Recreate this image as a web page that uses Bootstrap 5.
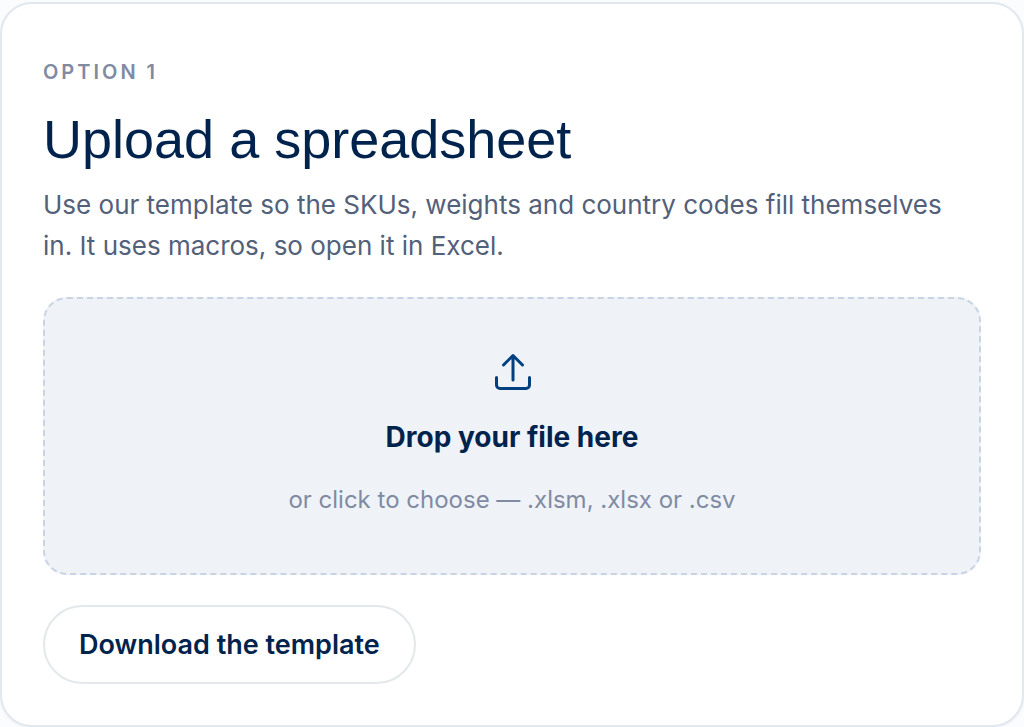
<!DOCTYPE html>
<html lang="en">
<head>
<meta charset="utf-8">
<meta name="viewport" content="width=device-width, initial-scale=1">
<title>Upload a spreadsheet</title>
<link href="https://cdn.jsdelivr.net/npm/bootstrap@5.3.0/dist/css/bootstrap.min.css" rel="stylesheet">
<style>
body{font-family:Inter,"Liberation Sans",sans-serif;background:#fbfcfd;color:#00234d}
.option-card{border:2px solid #e2e8f0;border-radius:32px;margin-top:2px;padding:54px 41px 41px;box-shadow:0 1px 3px rgba(0,35,77,.06)}
.eyebrow{font-size:20px;line-height:28px;font-weight:600;letter-spacing:3px;color:#808ba3;margin-bottom:21px}
.title{font-family:"Liberation Sans",Arial,sans-serif;font-size:54px;line-height:64px;font-weight:400;color:#00234d;margin-bottom:13px}
.intro{font-size:26px;line-height:41px;color:#52607a;padding-right:16px;margin-bottom:31px}
.dropzone{background:#eff3f8;border:2px dashed #c8d4e3;border-radius:24px;padding:54px 24px;margin-bottom:30px;cursor:pointer}
.drop-title{font-size:28px;line-height:40px;font-weight:700;color:#00234d}
.drop-hint{font-size:24px;line-height:38px;color:#808ba3}
.btn-template{border:2px solid #e2e8ec;font-size:27px;line-height:39px;font-weight:600;color:#00234d;padding:18px 34px;background:#fff}
</style>
</head>
<body>
<main class="card option-card">
<p class="eyebrow">OPTION 1</p>
<h1 class="title">Upload a spreadsheet</h1>
<p class="intro">Use our template so the SKUs, weights and country codes fill themselves in. It uses macros, so open it in Excel.</p>
<label class="dropzone d-flex flex-column align-items-center text-center" for="file">
<svg width="40" height="40" viewBox="0 0 40 40" fill="none" stroke="#00407f" stroke-width="3" stroke-linecap="round" stroke-linejoin="round" aria-hidden="true"><path d="M21 27V2.500M11.500 12 21 2.500l9.500 9.500M4.500 24.500v7.500a3.500 3.500 0 0 0 3.500 3.500h26a3.500 3.500 0 0 0 3.500-3.500v-7.500"/></svg>
<span class="drop-title mt-4">Drop your file here</span>
<span class="drop-hint mt-4">or click to choose — .xlsm, .xlsx or .csv</span>
<input class="visually-hidden" type="file" id="file" accept=".xlsm,.xlsx,.csv">
</label>
<button class="btn btn-template rounded-pill align-self-start" type="button">Download the template</button>
</main>
<script src="https://cdn.jsdelivr.net/npm/bootstrap@5.3.0/dist/js/bootstrap.bundle.min.js"></script>
</body>
</html>
